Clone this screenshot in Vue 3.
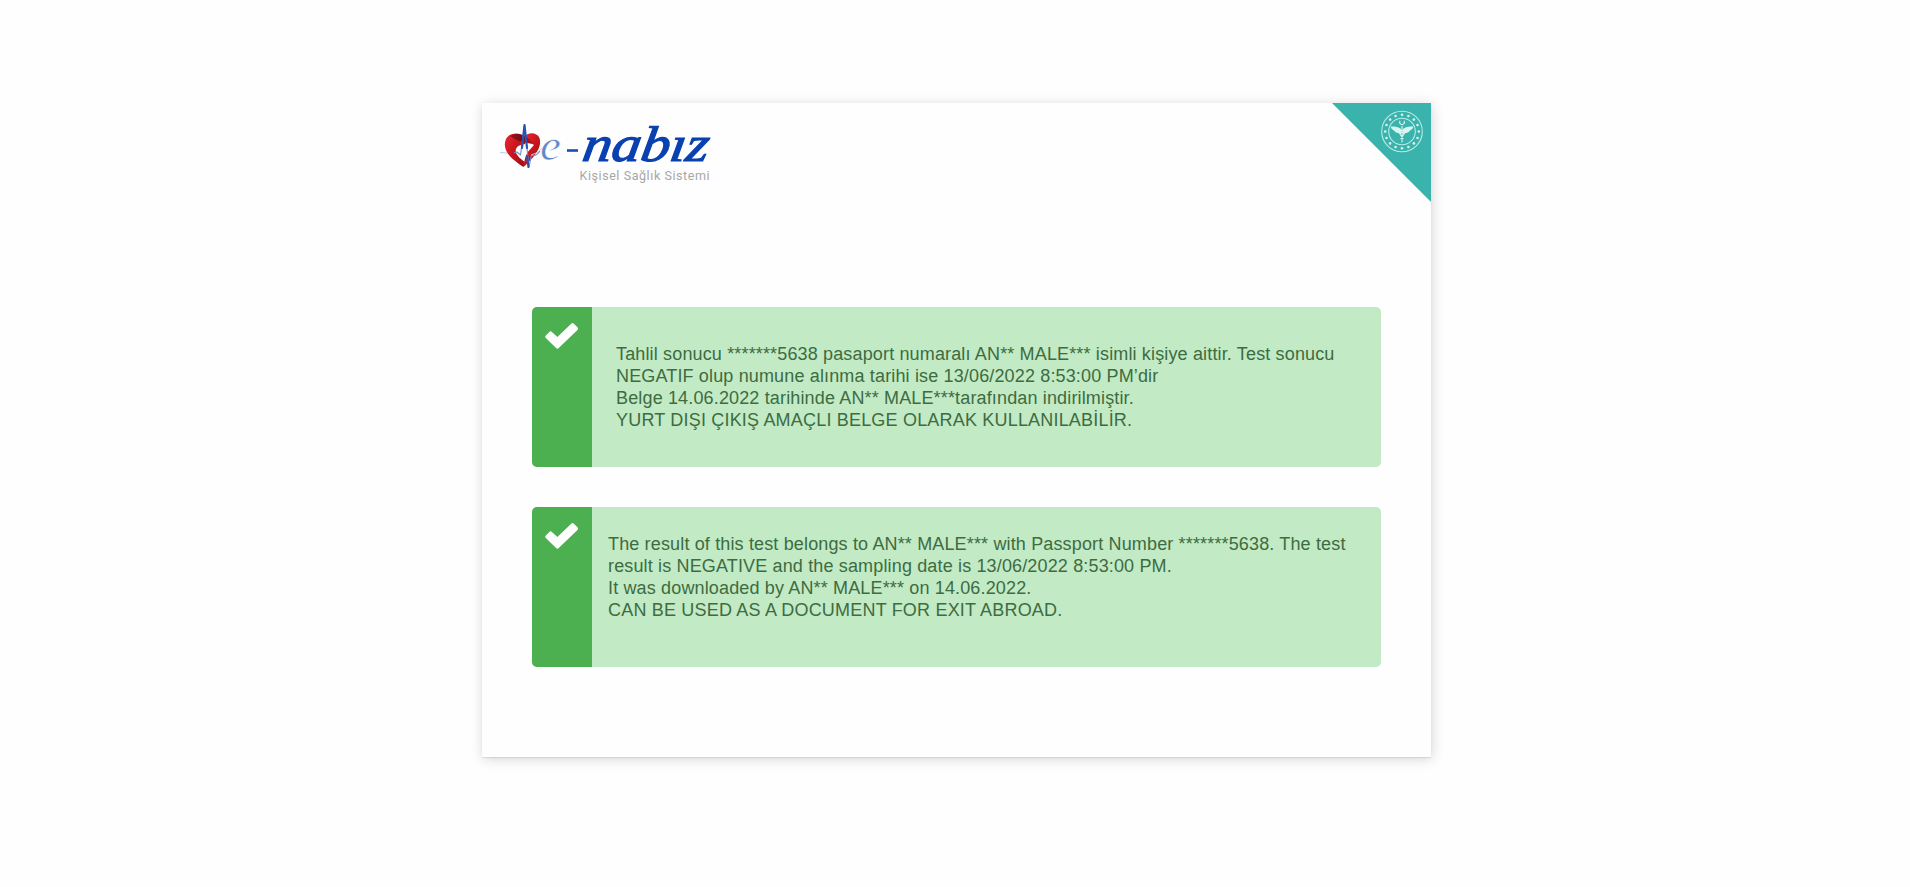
<script setup>
const results = [
  {
    id: 'tr',
    lines: [
      'Tahlil sonucu *******5638 pasaport numaralı AN** MALE*** isimli kişiye aittir. Test sonucu',
      'NEGATIF olup numune alınma tarihi ise 13/06/2022 8:53:00 PM’dir',
      'Belge 14.06.2022 tarihinde AN** MALE***tarafından indirilmiştir.',
      'YURT DIŞI ÇIKIŞ AMAÇLI BELGE OLARAK KULLANILABİLİR.',
    ],
  },
  {
    id: 'en',
    lines: [
      'The result of this test belongs to AN** MALE*** with Passport Number *******5638. The test',
      'result is NEGATIVE and the sampling date is 13/06/2022 8:53:00 PM.',
      'It was downloaded by AN** MALE*** on 14.06.2022.',
      'CAN BE USED AS A DOCUMENT FOR EXIT ABROAD.',
    ],
  },
]
const dots = Array.from({ length: 16 }, (_, i) => {
  const a = (i * Math.PI) / 8
  return { x: 71 + 16.8 * Math.sin(a), y: 28.5 - 16.8 * Math.cos(a) }
})
</script>

<template>
  <main class="page">
    <section class="card">
      <header class="head">
        <svg class="logo" width="220" height="70" viewBox="0 0 220 70">
          <defs>
            <linearGradient id="heart" x1="0" y1="0" x2="1" y2="1">
              <stop offset="0" stop-color="#e52a32" />
              <stop offset="0.5" stop-color="#c9141c" />
              <stop offset="1" stop-color="#9c0f17" />
            </linearGradient>
            <linearGradient id="fold" x1="0" y1="0" x2="1" y2="0">
              <stop offset="0" stop-color="#a01019" />
              <stop offset="0.5" stop-color="#6e0d16" />
              <stop offset="1" stop-color="#c5161e" />
            </linearGradient>
          </defs>
          <g transform="translate(0 2)">
            <path d="M0 31.500Q8 33 14 31" class="faint" />
            <path d="M25 16C20 10.500 9 11.500 6 18C2 27 9 35 14 39C18 42.500 21 44.500 23.500 46L25 41C19 37 14.500 32.500 16 28C17.500 24.500 21 23.500 25 23Z" fill="url(#heart)" />
            <path d="M24 16C28 11 36.500 11 39.500 17C42 24 37 32 31.500 38C28 41.500 26 44 23.500 46C24.500 38 26 32 30 28.500L34 24C30 20.500 27 20 24 20Z" fill="url(#heart)" />
            <path d="M10 15C18 10.500 27 14 34 23.500C27 21.500 19 22 10 15Z" fill="url(#fold)" />
            <path d="M14 32L17 31L20.500 34L24.500 4L29 46L31.500 34Q36 36 40 30" class="pulse-thin" />
            <path d="M22 27L24.500 4L27 27M27 35L28.500 46" class="pulse" />
            <path d="M31 34Q38 33 43 26" class="faint" />
          </g>
          <text x="40" y="41" class="script" textLength="21" lengthAdjust="spacingAndGlyphs">e</text>
          <path d="M67 31.500H78" class="dash" />
          <text transform="translate(81 42) skewX(-9)" class="word" textLength="126" lengthAdjust="spacingAndGlyphs">nabız</text>
          <text x="79.500" y="60.500" class="tag" textLength="130">Kişisel Sağlık Sistemi</text>
        </svg>
        <svg class="corner" width="99" height="99" viewBox="1 0 99 99">
          <path d="M1 0H100V99Z" fill="#39b3ac" />
          <g class="rings">
            <circle cx="71" cy="28.5" r="20.3" />
            <circle cx="71" cy="28.5" r="13.3" />
          </g>
          <g fill="#d8f5f2">
            <circle v-for="(d, i) in dots" :key="i" :cx="d.x" :cy="d.y" r="1.3" />
            <path d="M70 26C67 23.500 63 23.500 59.500 23.500C60 26 62 27 63 27.500C64 29.500 66.500 30 67.500 30C68.500 31.500 70 31 70 31ZM72 26C75 23.500 79 23.500 82.500 23.500C82 26 80 27 79 27.500C78 29.500 75.500 30 74.500 30C73.500 31.500 72 31 72 31Z" />
          </g>
          <path d="M71 23V39.500M68.500 26Q71 28 73 31Q71 34.500 69.500 35.500M73.500 26Q71 28 69 31Q71 34.500 72.500 35.500" class="staff" />
          <path d="M69 17.800A2.400 2.400 0 1 0 73 17.800" class="staff" />
        </svg>
      </header>

      <article v-for="r in results" :key="r.id" class="result">
        <div class="status">
          <svg width="36" height="28" viewBox="0 0 36 28">
            <path d="M1.800 13.500L5.300 9.900Q6.600 8.700 7.900 9.900L13.400 15.100L27.200 1.700Q28.500 .5 29.800 1.700L33.500 5.300Q34.800 6.600 33.500 7.900L14.700 26.100Q13.400 27.300 12.100 26.100L1.800 16.100Q.5 14.800 1.800 13.500Z" fill="#fff" />
          </svg>
        </div>
        <p class="message" :class="r.id">
          <span v-for="line in r.lines" :key="line">{{ line }}</span>
        </p>
      </article>
    </section>
  </main>
</template>

<style>
body {
  margin: 0;
  background: #fefefe;
}
</style>

<style scoped>
.page {
  box-sizing: border-box;
  height: 887px;
  padding-top: 103px;
  padding-left: 482px;
  font-family: 'Liberation Sans', Arial, sans-serif;
}
.card {
  box-sizing: border-box;
  width: 949px;
  height: 654px;
  background: #fefefe;
  box-shadow: 0 1px 1px rgba(0, 0, 0, 0.08), 1px 2px 12px rgba(0, 0, 0, 0.16);
}
.head {
  display: flex;
  justify-content: space-between;
  align-items: flex-start;
  height: 204px;
}
.logo {
  margin: 16px 0 0 18px;
  overflow: visible;
}
.corner,
.logo,
.status svg {
  display: block;
}
.faint {
  fill: none;
  stroke: #b9cbe8;
  stroke-width: 1;
}
.pulse-thin {
  fill: none;
  stroke: #6e8fca;
  stroke-width: 1.1;
  stroke-linejoin: round;
}
.pulse {
  fill: none;
  stroke: #2a52b2;
  stroke-width: 2.2;
  stroke-linejoin: round;
  stroke-linecap: round;
}
.script {
  font: italic 45px 'Liberation Serif', serif;
  fill: #6288c8;
  stroke: #fefefe;
  stroke-width: 0.6;
}
.dash {
  stroke: #1a4fb4;
  stroke-width: 2.6;
}
.word {
  font: italic 50px 'Liberation Serif', serif;
  fill: #0a41b0;
  stroke: #0a41b0;
  stroke-width: 1.2;
}
.tag {
  font: 12.5px Roboto, sans-serif;
  fill: #a6a6a6;
}
.rings {
  fill: none;
  stroke: #b9ebe7;
  stroke-width: 1.1;
}
.staff {
  fill: none;
  stroke: #d8f5f2;
  stroke-width: 1.1;
}
.result {
  display: flex;
  width: 849px;
  height: 160px;
  margin: 0 0 40px 50px;
  border-radius: 5px;
  overflow: hidden;
  background: #c2eac5;
}
.status {
  flex: none;
  display: flex;
  justify-content: center;
  align-items: flex-start;
  box-sizing: border-box;
  width: 60px;
  padding-top: 15px;
  background: #4cb050;
}
.message {
  display: flex;
  flex-direction: column;
  margin: 0;
  font-size: 18px;
  line-height: 22px;
  letter-spacing: 0.15px;
  color: #3d6c41;
  white-space: nowrap;
}
.message span:last-child {
  letter-spacing: 0.19px;
}
.message.tr {
  padding: 36px 0 0 24px;
}
.message.en {
  padding: 26px 0 0 16px;
}
</style>
